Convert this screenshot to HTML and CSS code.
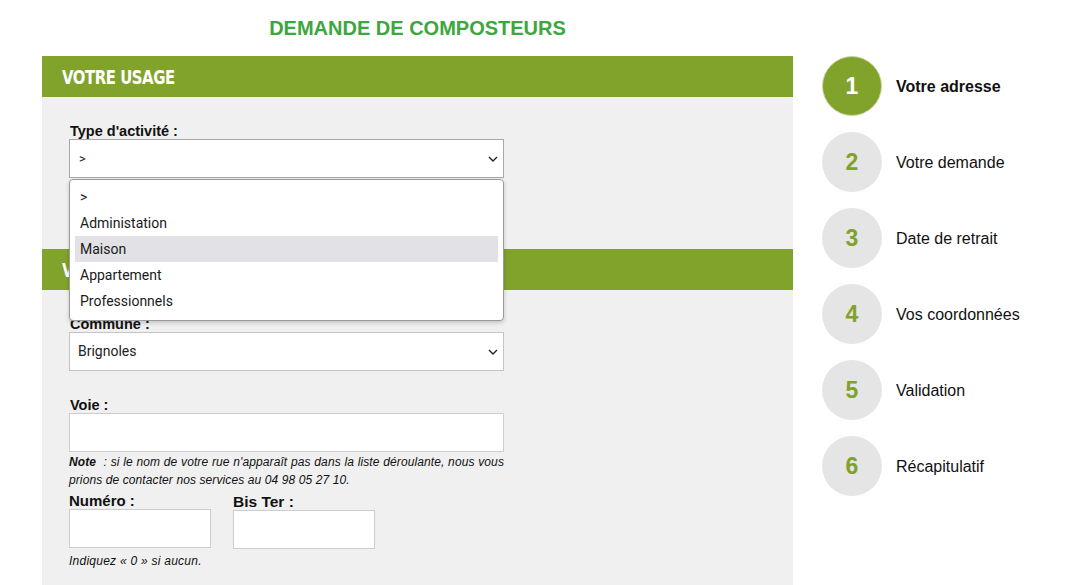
FILE: index.html
```html
<!DOCTYPE html>
<html lang="fr">
<head>
<meta charset="utf-8">
<title>Demande de composteurs</title>
<link rel="stylesheet" href="styles.css">
</head>
<body>
<div class="page">
  <main class="main">
    <h1 class="title">DEMANDE DE COMPOSTEURS</h1>

    <section class="section">
      <h2 class="section-head"><span class="head-text">VOTRE USAGE</span></h2>
      <div class="section-body body-usage">
        <label class="label">Type d'activité :</label>
        <div class="select-wrap">
          <div class="select">&gt;</div>
          <svg class="chevron" width="10" height="6" viewBox="0 0 10 6"><path d="M1 1l4 4 4-4" fill="none" stroke="#222" stroke-width="1.4"/></svg>
          <ul class="dropdown">
            <li class="option">&gt;</li>
            <li class="option">Administation</li>
            <li class="option option-hover">Maison</li>
            <li class="option">Appartement</li>
            <li class="option">Professionnels</li>
          </ul>
        </div>
      </div>
    </section>

    <section class="section">
      <h2 class="section-head"><span class="head-text">VOTRE ADRESSE</span></h2>
      <div class="section-body body-address">
        <label class="label">Commune :</label>
        <div class="select-wrap">
          <div class="select select-lg">Brignoles</div>
          <svg class="chevron" width="10" height="6" viewBox="0 0 10 6"><path d="M1 1l4 4 4-4" fill="none" stroke="#222" stroke-width="1.4"/></svg>
        </div>

        <label class="label label-voie">Voie :</label>
        <div class="input input-wide"></div>
        <p class="note"><b>Note</b>&nbsp; : si le nom de votre rue n'apparaît pas dans la liste déroulante, nous vous prions de contacter nos services au 04 98 05 27 10.</p>

        <div class="row">
          <div class="field">
            <label class="label label-num">Numéro :</label>
            <div class="input input-small"></div>
          </div>
          <div class="field">
            <label class="label label-bis">Bis Ter :</label>
            <div class="input input-small"></div>
          </div>
        </div>
        <p class="hint">Indiquez « 0 » si aucun.</p>
      </div>
    </section>
  </main>

  <aside class="steps">
    <div class="step step-active"><span class="circle">1</span><span class="step-label">Votre adresse</span></div>
    <div class="step"><span class="circle">2</span><span class="step-label">Votre demande</span></div>
    <div class="step"><span class="circle">3</span><span class="step-label">Date de retrait</span></div>
    <div class="step"><span class="circle">4</span><span class="step-label">Vos coordonnées</span></div>
    <div class="step"><span class="circle">5</span><span class="step-label">Validation</span></div>
    <div class="step"><span class="circle">6</span><span class="step-label">Récapitulatif</span></div>
  </aside>
</div>
</body>
</html>
```

FILE: styles.css
```css
* { box-sizing: border-box; }
html, body { margin: 0; padding: 0; background: #fff; }
body {
  font-family: "Liberation Sans", Arial, sans-serif;
  color: #111;
  overflow: hidden;
  height: 585px;
}
.page {
  display: flex;
  align-items: flex-start;
}
.main {
  margin-left: 42px;
  width: 751px;
}
.title {
  margin: 0;
  height: 56px;
  line-height: 56px;
  text-align: center;
  font-size: 20px;
  font-weight: bold;
  color: #3ca63f;
  letter-spacing: 0;
}
.section-head {
  margin: 0;
  height: 41px;
  line-height: 43px;
  background: #81a32b;
  color: #fff;
  padding-left: 20px;
  font-family: "DejaVu Sans Condensed", "DejaVu Sans", sans-serif;
  font-stretch: condensed;
  font-size: 19px;
  font-weight: bold;
  letter-spacing: -0.5px;
}
.head-text {
  display: inline-block;
  transform: scaleX(0.87);
  transform-origin: left center;
}
.section-body {
  background: #f0f0f0;
  padding-left: 27px;
}
.body-usage {
  padding-top: 26px;
  height: 152px;
}
.body-address {
  padding-top: 26px;
  height: 320px;
}
.label {
  display: block;
  font-size: 14.5px;
  font-weight: bold;
  line-height: 16px;
  color: #111;
  padding-left: 1px;
}
.select-wrap {
  position: relative;
  width: 435px;
}
.select {
  height: 39px;
  background: #fff;
  border: 1px solid #c4c4c4;
  font-family: Roboto, "Liberation Sans", sans-serif;
  font-size: 13px;
  line-height: 37px;
  padding-left: 9px;
  color: #222;
}
.body-usage .select { border-color: #a8a8a8; }
.select-lg { font-size: 14px; padding-left: 8px; }
.chevron {
  position: absolute;
  right: 6px;
  top: 17px;
}
.dropdown {
  position: absolute;
  left: 0;
  top: 40px;
  width: 435px;
  margin: 0;
  list-style: none;
  padding: 4px 5px 6px;
  background: #fff;
  border: 1px solid #9a9a9a;
  border-radius: 4px;
  box-shadow: 0 2px 4px rgba(0,0,0,0.18);
  z-index: 10;
}
.option {
  height: 26px;
  line-height: 26px;
  padding-left: 5px;
  font-family: Roboto, "Liberation Sans", sans-serif;
  font-size: 14px;
  color: #1a1a1a;
}
.option-hover { background: #e1e1e6; }
.label-voie { margin-top: 26px; }
.input {
  background: #fff;
  border: 1px solid #cdcdcd;
  height: 39px;
}
.input-wide { width: 435px; }
.input-small { width: 142px; }
.note {
  margin: 1px 0 0;
  width: 435px;
  font-size: 12px;
  font-style: italic;
  line-height: 18px;
  text-align: justify;
  letter-spacing: 0.1px;
  color: #111;
}
.row {
  display: flex;
  gap: 22px;
  margin-top: 4px;
}
.label-num { font-size: 15px; padding-left: 0; }
.label-bis { font-size: 15.5px; padding-left: 0; margin-top: 1px; }
.hint {
  margin: 3px 0 0;
  font-size: 12px;
  font-style: italic;
  line-height: 18px;
  letter-spacing: 0.25px;
  color: #111;
}
.steps {
  margin-left: 29px;
  padding-top: 56px;
  display: flex;
  flex-direction: column;
  gap: 16px;
}
.step {
  display: flex;
  align-items: center;
  gap: 14px;
}
.circle {
  width: 60px;
  height: 60px;
  border-radius: 50%;
  background: #e5e5e5;
  color: #80a22b;
  font-size: 23px;
  font-weight: bold;
  display: flex;
  align-items: center;
  justify-content: center;
}
.step-active .circle {
  background: #81a32b;
  color: #fff;
  border: 1px solid #cbd8a6;
}
.step-label {
  font-size: 16px;
  line-height: 18px;
  padding-top: 2px;
  color: #111;
}
.step-active .step-label { font-weight: bold; }
```
